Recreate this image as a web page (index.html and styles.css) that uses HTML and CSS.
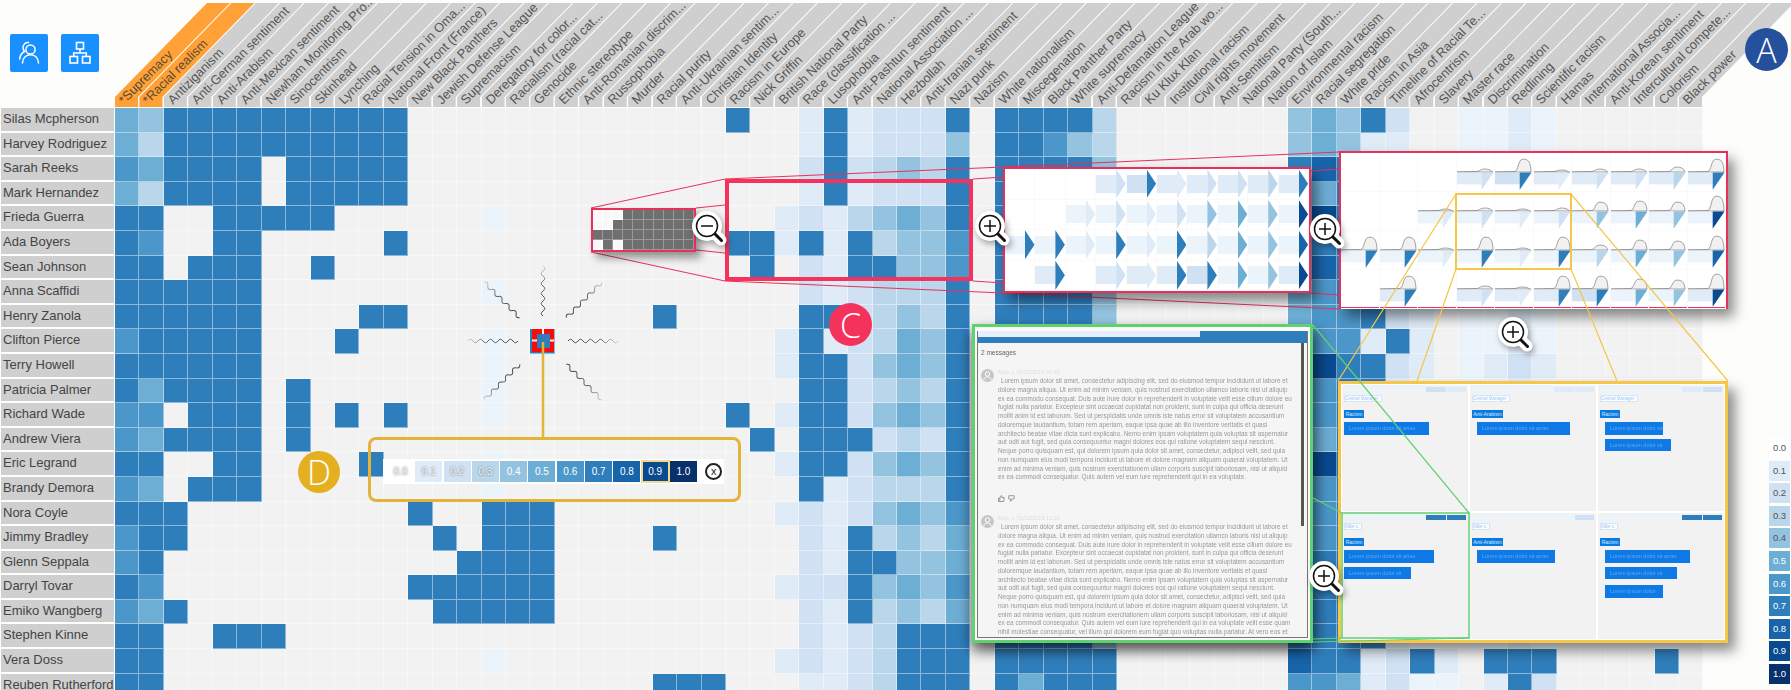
FILE: index.html
```html
<!DOCTYPE html>
<html lang="en">
<head>
<meta charset="utf-8">
<title>Topic matrix</title>
<link rel="stylesheet" href="styles.css">
</head>
<body>
<div class="page">
  <main class="matrix">
    <div class="head">
      <div class="tools">
        <button class="tool" type="button" aria-label="Users">
          <svg width="24" height="24" viewBox="0 0 24 24" fill="none" stroke="#fff" stroke-width="1.5" stroke-linecap="round" stroke-linejoin="round"><circle cx="13.5" cy="8.5" r="4.6"/><path d="M5.5 22c.3-5 3.3-8.300 8-8.300s7.700 3.300 8 8.300"/><path d="M11.500 1.500C8.500 1.200 6 3.400 6 6.500c0 1.700.7 3 1.700 4C4.800 11.800 3 14.500 2.700 18"/></svg>
        </button>
        <button class="tool" type="button" aria-label="Hierarchy">
          <svg width="24" height="24" viewBox="0 0 24 24" fill="none" stroke="#fff" stroke-width="1.6"><rect x="8.500" y="1.500" width="7" height="6.500"/><rect x="2" y="15.500" width="7.500" height="6.500"/><rect x="14.500" y="15.500" width="7.500" height="6.500"/><path d="M12 8v4M5.700 15.500V12h12.600v3.500"/></svg>
        </button>
      </div>
      <div class="cols">
        <div class="ch hot"><div class="ch-s"><span>*Supremacy</span></div></div>
        <div class="ch hot"><div class="ch-s"><span>*Racial realism</span></div></div>
        <div class="ch"><div class="ch-s"><span>Antiziganism</span></div></div>
        <div class="ch"><div class="ch-s"><span>Anti-German sentiment</span></div></div>
        <div class="ch"><div class="ch-s"><span>Anti-Arabism</span></div></div>
        <div class="ch"><div class="ch-s"><span>Anti-Mexican sentiment</span></div></div>
        <div class="ch"><div class="ch-s"><span>Newham Monitoring Pro...</span></div></div>
        <div class="ch"><div class="ch-s"><span>Sinocentrism</span></div></div>
        <div class="ch"><div class="ch-s"><span>Skinhead</span></div></div>
        <div class="ch"><div class="ch-s"><span>Lynching</span></div></div>
        <div class="ch"><div class="ch-s"><span>Racial Tension in Oma...</span></div></div>
        <div class="ch"><div class="ch-s"><span>National Front (France)</span></div></div>
        <div class="ch"><div class="ch-s"><span>New Black Panthers</span></div></div>
        <div class="ch"><div class="ch-s"><span>Jewish Defense League</span></div></div>
        <div class="ch"><div class="ch-s"><span>Supremacism</span></div></div>
        <div class="ch"><div class="ch-s"><span>Deregatory for color...</span></div></div>
        <div class="ch"><div class="ch-s"><span>Racialism (racial cat...</span></div></div>
        <div class="ch"><div class="ch-s"><span>Genocide</span></div></div>
        <div class="ch"><div class="ch-s"><span>Ethnic stereotype</span></div></div>
        <div class="ch"><div class="ch-s"><span>Anti-Romanian discrim...</span></div></div>
        <div class="ch"><div class="ch-s"><span>Russophobia</span></div></div>
        <div class="ch"><div class="ch-s"><span>Murder</span></div></div>
        <div class="ch"><div class="ch-s"><span>Racial purity</span></div></div>
        <div class="ch"><div class="ch-s"><span>Anti-Ukrainian sentim...</span></div></div>
        <div class="ch"><div class="ch-s"><span>Christian Identity</span></div></div>
        <div class="ch"><div class="ch-s"><span>Racism in Europe</span></div></div>
        <div class="ch"><div class="ch-s"><span>Nick Griffin</span></div></div>
        <div class="ch"><div class="ch-s"><span>British National Party</span></div></div>
        <div class="ch"><div class="ch-s"><span>Race (classification ...</span></div></div>
        <div class="ch"><div class="ch-s"><span>Lusophobia</span></div></div>
        <div class="ch"><div class="ch-s"><span>Anti-Pashtun sentiment</span></div></div>
        <div class="ch"><div class="ch-s"><span>National Association ...</span></div></div>
        <div class="ch"><div class="ch-s"><span>Hezbollah</span></div></div>
        <div class="ch"><div class="ch-s"><span>Anti-Iranian sentiment</span></div></div>
        <div class="ch"><div class="ch-s"><span>Nazi punk</span></div></div>
        <div class="ch"><div class="ch-s"><span>Nazism</span></div></div>
        <div class="ch"><div class="ch-s"><span>White nationalism</span></div></div>
        <div class="ch"><div class="ch-s"><span>Miscegenation</span></div></div>
        <div class="ch"><div class="ch-s"><span>Black Panther Party</span></div></div>
        <div class="ch"><div class="ch-s"><span>White supremacy</span></div></div>
        <div class="ch"><div class="ch-s"><span>Anti-Defamation League</span></div></div>
        <div class="ch"><div class="ch-s"><span>Racism in the Arab wo...</span></div></div>
        <div class="ch"><div class="ch-s"><span>Ku Klux Klan</span></div></div>
        <div class="ch"><div class="ch-s"><span>Institutional racism</span></div></div>
        <div class="ch"><div class="ch-s"><span>Civil rights movement</span></div></div>
        <div class="ch"><div class="ch-s"><span>Anti-Semitism</span></div></div>
        <div class="ch"><div class="ch-s"><span>National Party (South...</span></div></div>
        <div class="ch"><div class="ch-s"><span>Nation of Islam</span></div></div>
        <div class="ch"><div class="ch-s"><span>Environmental racism</span></div></div>
        <div class="ch"><div class="ch-s"><span>Racial segregation</span></div></div>
        <div class="ch"><div class="ch-s"><span>White pride</span></div></div>
        <div class="ch"><div class="ch-s"><span>Racism in Asia</span></div></div>
        <div class="ch"><div class="ch-s"><span>Timeline of Racial Te...</span></div></div>
        <div class="ch"><div class="ch-s"><span>Afrocentrism</span></div></div>
        <div class="ch"><div class="ch-s"><span>Slavery</span></div></div>
        <div class="ch"><div class="ch-s"><span>Master race</span></div></div>
        <div class="ch"><div class="ch-s"><span>Discrimination</span></div></div>
        <div class="ch"><div class="ch-s"><span>Redlining</span></div></div>
        <div class="ch"><div class="ch-s"><span>Scientific racism</span></div></div>
        <div class="ch"><div class="ch-s"><span>Hamas</span></div></div>
        <div class="ch"><div class="ch-s"><span>International Associa...</span></div></div>
        <div class="ch"><div class="ch-s"><span>Anti-Korean sentiment</span></div></div>
        <div class="ch"><div class="ch-s"><span>Intercultural compete...</span></div></div>
        <div class="ch"><div class="ch-s"><span>Colorism</span></div></div>
        <div class="ch"><div class="ch-s"><span>Black power</span></div></div>
      </div>
    </div>
    <div class="body">
      <div class="names">
        <div class="name">Silas Mcpherson</div>
        <div class="name">Harvey Rodriguez</div>
        <div class="name">Sarah Reeks</div>
        <div class="name">Mark Hernandez</div>
        <div class="name">Frieda Guerra</div>
        <div class="name">Ada Boyers</div>
        <div class="name">Sean Johnson</div>
        <div class="name">Anna Scaffidi</div>
        <div class="name">Henry Zanola</div>
        <div class="name">Clifton Pierce</div>
        <div class="name">Terry Howell</div>
        <div class="name">Patricia Palmer</div>
        <div class="name">Richard Wade</div>
        <div class="name">Andrew Viera</div>
        <div class="name">Eric Legrand</div>
        <div class="name">Brandy Demora</div>
        <div class="name">Nora Coyle</div>
        <div class="name">Jimmy Bradley</div>
        <div class="name">Glenn Seppala</div>
        <div class="name">Darryl Tovar</div>
        <div class="name">Emiko Wangberg</div>
        <div class="name">Stephen Kinne</div>
        <div class="name">Vera Doss</div>
        <div class="name">Reuben Rutherford</div>
      </div>
      <div class="cells" id="cells"></div>
    </div>
  </main>
  <aside class="side">
    <div class="badge badge-a">A</div>
    <div class="legend">
      <div class="lg v0 dk">0.0</div><div class="lg v2 dk">0.1</div><div class="lg v3 dk">0.2</div><div class="lg v4 dk">0.3</div><div class="lg v5 dk">0.4</div><div class="lg v6">0.5</div><div class="lg v7">0.6</div><div class="lg v8">0.7</div><div class="lg v9">0.8</div><div class="lg va">0.9</div><div class="lg vb">1.0</div>
    </div>
  </aside>
</div>

<svg class="layer" width="1791" height="690" aria-hidden="true">
  <g class="red-lines">
    <path d="M591 208L725 179M696 208L725 205M591 252L725 281M696 250L725 253"/>
    <path d="M725 179L1003 167L1339 152M973 179L1003 177M973 281L1003 283M725 281L1003 293L1339 309M1311 171L1339 169M1311 293L1339 295"/>
  </g>
</svg>

<div class="mini" id="mini"></div>
<div class="focus"></div>
<div class="glyph-panel" id="arrows"></div>
<div class="glyph-panel area-panel" id="areas"></div>

<div class="mail">
  <div class="mail-in">
    <div class="mail-top"><span class="seg-a"></span><span class="seg-b"></span></div>
    <div class="mail-bar"></div>
    <div class="mail-body">
      <div class="scroll"></div>
      <div class="count">2 messages</div>
      <div class="msg">
        <svg class="avatar" viewBox="0 0 13 13"><circle cx="6.500" cy="6.500" r="6.500" fill="#c6c6c6"/><circle cx="6.500" cy="5" r="2.200" fill="none" stroke="#fff"/><path d="M2.800 11c.5-2.300 2-3 3.700-3s3.200.7 3.700 3" fill="none" stroke="#fff"/></svg>
        <div class="msg-main">
          <div class="who">Mike c. 01/12/2016 07:45</div>
          <p class="txt">Lorem ipsum dolor sit amet, consectetur adipiscing elit, sed do eiusmod tempor incididunt ut labore et dolore magna aliqua. Ut enim ad minim veniam, quis nostrud exercitation ullamco laboris nisi ut aliquip ex ea commodo consequat. Duis aute irure dolor in reprehenderit in voluptate velit esse cillum dolore eu fugiat nulla pariatur. Excepteur sint occaecat cupidatat non proident, sunt in culpa qui officia deserunt mollit anim id est laborum. Sed ut perspiciatis unde omnis iste natus error sit voluptatem accusantium doloremque laudantium, totam rem aperiam, eaque ipsa quae ab illo inventore veritatis et quasi architecto beatae vitae dicta sunt explicabo. Nemo enim ipsam voluptatem quia voluptas sit aspernatur aut odit aut fugit, sed quia consequuntur magni dolores eos qui ratione voluptatem sequi nesciunt. Neque porro quisquam est, qui dolorem ipsum quia dolor sit amet, consectetur, adipisci velit, sed quia non numquam eius modi tempora incidunt ut labore et dolore magnam aliquam quaerat voluptatem. Ut enim ad minima veniam, quis nostrum exercitationem ullam corporis suscipit laboriosam, nisi ut aliquid ex ea commodi consequatur. Quis autem vel eum iure reprehenderit qui in ea voluptate.</p>
          <div class="thumbs">
            <svg width="7" height="7" viewBox="0 0 7 7" fill="none" stroke="#777" stroke-width=".7"><path d="M.5 3h1.300v3.500H.5zM1.800 3l1.500-2.500c.6 0 .8.500.6 1L3.600 2.600h2.700l-.6 3.900H1.800"/></svg>
            <svg width="7" height="7" viewBox="0 0 7 7" fill="none" stroke="#777" stroke-width=".7"><path d="M.7 .7h5.500v3.100H4.300L3 6.300c-.6 0-.7-.5-.6-1l.3-1.500H.7z"/></svg>
          </div>
        </div>
      </div>
      <div class="msg msg-2">
        <svg class="avatar" viewBox="0 0 13 13"><circle cx="6.500" cy="6.500" r="6.500" fill="#c6c6c6"/><circle cx="6.500" cy="5" r="2.200" fill="none" stroke="#fff"/><path d="M2.800 11c.5-2.300 2-3 3.700-3s3.200.7 3.700 3" fill="none" stroke="#fff"/></svg>
        <div class="msg-main">
          <div class="who">Mike c. 01/12/2016 11:02</div>
          <p class="txt">Lorem ipsum dolor sit amet, consectetur adipiscing elit, sed do eiusmod tempor incididunt ut labore et dolore magna aliqua. Ut enim ad minim veniam, quis nostrud exercitation ullamco laboris nisi ut aliquip ex ea commodo consequat. Duis aute irure dolor in reprehenderit in voluptate velit esse cillum dolore eu fugiat nulla pariatur. Excepteur sint occaecat cupidatat non proident, sunt in culpa qui officia deserunt mollit anim id est laborum. Sed ut perspiciatis unde omnis iste natus error sit voluptatem accusantium doloremque laudantium, totam rem aperiam, eaque ipsa quae ab illo inventore veritatis et quasi architecto beatae vitae dicta sunt explicabo. Nemo enim ipsam voluptatem quia voluptas sit aspernatur aut odit aut fugit, sed quia consequuntur magni dolores eos qui ratione voluptatem sequi nesciunt. Neque porro quisquam est, qui dolorem ipsum quia dolor sit amet, consectetur, adipisci velit, sed quia non numquam eius modi tempora incidunt ut labore et dolore magnam aliquam quaerat voluptatem. Ut enim ad minima veniam, quis nostrum exercitationem ullam corporis suscipit laboriosam, nisi ut aliquid ex ea commodi consequatur. Quis autem vel eum iure reprehenderit qui in ea voluptate velit esse quam nihil molestiae consequatur, vel illum qui dolorem eum fugiat quo voluptas nulla pariatur. At vero eos et accusamus et iusto odio dignissimos ducimus qui blanditiis praesentium.</p>
        </div>
      </div>
    </div>
  </div>
</div>

<div class="board">
  <section class="card">
    <div class="strip"><i class="v1"></i><i class="v1"></i><i class="v1"></i><i class="v1"></i><i class="v3"></i><i class="v2"></i></div>
    <div class="pill">Central Manager</div><div class="tag">Racism</div>
    <div class="bar" style="width:85px"><span>Lorem ipsum dolor sit amet</span></div>
  </section>
  <section class="card indent">
    <div class="strip"><i class="v1"></i><i class="v1"></i><i class="v1"></i><i class="v1"></i><i class="v2"></i><i class="v2"></i></div>
    <div class="pill">Central Manager</div><div class="tag wide">Anti-Arabism</div>
    <div class="bar" style="width:93px"><span>Lorem ipsum dolor sit amet</span></div>
  </section>
  <section class="card indent">
    <div class="strip"><i class="v1"></i><i class="v1"></i><i class="v1"></i><i class="v1"></i><i class="v2"></i><i class="v3"></i></div>
    <div class="pill">Central Manager</div><div class="tag">Racism</div>
    <div class="bar" style="width:58px"><span>Lorem ipsum dolor sit</span></div>
    <div class="bar" style="width:66px"><span>Lorem ipsum dolor sit</span></div>
  </section>
  <section class="card">
    <div class="strip"><i class="v1"></i><i class="v1"></i><i class="v1"></i><i class="v1"></i><i class="v8"></i><i class="v8"></i></div>
    <div class="pill short">Mike c.</div><div class="tag">Racism</div>
    <div class="bar" style="width:90px"><span>Lorem ipsum dolor sit amet</span></div>
    <div class="bar" style="width:67px"><span>Lorem ipsum dolor sit</span></div>
  </section>
  <section class="card indent">
    <div class="strip"><i class="v1"></i><i class="v1"></i><i class="v1"></i><i class="v1"></i><i class="v1"></i><i class="v3"></i></div>
    <div class="pill short">Mike c.</div><div class="tag wide">Anti-Arabism</div>
    <div class="bar" style="width:78px"><span>Lorem ipsum dolor sit amet</span></div>
  </section>
  <section class="card indent">
    <div class="strip"><i class="v1"></i><i class="v1"></i><i class="v1"></i><i class="v1"></i><i class="v8"></i><i class="v8"></i></div>
    <div class="pill short">Mike c.</div><div class="tag">Racism</div>
    <div class="bar" style="width:85px"><span>Lorem ipsum dolor sit amet</span></div>
    <div class="bar" style="width:72px"><span>Lorem ipsum dolor sit</span></div>
    <div class="bar bar-far" style="width:58px"><span>Lorem ipsum dolor</span></div>
  </section>
</div>

<div class="scale">
  <div class="strip-scale">
    <span class="sc v0 soft">0.0</span><span class="sc v2 soft">0.1</span><span class="sc v3 soft">0.2</span><span class="sc v4 soft">0.3</span><span class="sc v5">0.4</span><span class="sc v6">0.5</span><span class="sc v7">0.6</span><span class="sc v8">0.7</span><span class="sc v9">0.8</span><span class="sc va on">0.9</span><span class="sc vb">1.0</span>
    <span class="close">x</span>
  </div>
</div>

<svg class="layer" width="1791" height="690" aria-hidden="true">
  <defs>
    <linearGradient id="fade" gradientUnits="userSpaceOnUse" x1="24" y1="0" x2="80" y2="0"><stop offset="0" stop-color="#444"/><stop offset=".6" stop-color="#666"/><stop offset="1" stop-color="#999" stop-opacity=".2"/></linearGradient>
    <path id="wave" d="M25 0q2.500 -3.500 5 0t5 0t5 0t5 0t5 0t5 0t5 0t5 0t5 0t5 0" fill="none" stroke="url(#fade)" stroke-width="1"/>
    <g id="lens">
      <g class="halo"><circle r="15" fill="#fff"/><path d="M4 4L14 14" stroke="#fff" stroke-width="11" stroke-linecap="round"/></g>
      <circle r="10.500" fill="#fff" stroke="#111" stroke-width="1.500"/>
      <path d="M8 8L14.500 14.500" stroke="#111" stroke-width="3" stroke-linecap="round"/>
    </g>
  </defs>
  <rect class="marker-r" x="532" y="329" width="22" height="23"/>
  <path d="M543 329v6M543 346v6M532 340.500h6M548 340.500h6" stroke="#f2f2f2" stroke-width="2"/>
  <rect class="marker-c" x="537" y="334" width="13" height="14"/>
  <use href="#wave" transform="translate(543 341) rotate(0)"/>
  <use href="#wave" transform="translate(543 341) rotate(180)"/>
  <use href="#wave" transform="translate(543 341) rotate(-90)"/>
  <use href="#wave" transform="translate(543 341) rotate(-45) translate(8 0)"/>
  <use href="#wave" transform="translate(543 341) rotate(-135) translate(8 0)"/>
  <use href="#wave" transform="translate(543 341) rotate(45) translate(8 0)"/>
  <use href="#wave" transform="translate(543 341) rotate(135) translate(8 0)"/>
  <path class="stem" d="M543 342V437"/>
  <g class="yellow-lines"><path d="M1456 194L1338 381M1456 269L1417 381M1571 269L1617 381M1571 194L1728 381"/></g>
  <rect class="yellow-box" x="1456" y="194" width="115" height="75"/>
  <g class="green-lines"><path d="M1313 325L1469 513M1313 498L1342 513M1313 639L1342 638M1313 642L1469 638"/></g>
  <rect class="green-box" x="1342" y="513" width="127" height="125"/>
  <g transform="translate(707 226)"><use href="#lens"/><path d="M-6 0H6" stroke="#111" stroke-width="1.500"/></g>
  <g transform="translate(990 226)"><use href="#lens"/><path d="M-6 0H6M0 -6V6" stroke="#111" stroke-width="1.500"/></g>
  <g transform="translate(1325 229)"><use href="#lens"/><path d="M-6 0H6M0 -6V6" stroke="#111" stroke-width="1.500"/></g>
  <g transform="translate(1513 332)"><use href="#lens"/><path d="M-6 0H6M0 -6V6" stroke="#111" stroke-width="1.500"/></g>
  <g transform="translate(1324 576)"><use href="#lens"/><path d="M-6 0H6M0 -6V6" stroke="#111" stroke-width="1.500"/></g>
</svg>

<div class="badge badge-c">C</div>
<div class="badge badge-d">D</div>
<script src="script.js"></script>
</body>
</html>
```
FILE: styles.css
```css
* { box-sizing: border-box; }
html, body { margin: 0; padding: 0; }
body {
  width: 1791px;
  height: 690px;
  overflow: hidden;
  position: relative;
  background: #fdfdfb;
  font-family: "Liberation Sans", Arial, sans-serif;
  color: #444;
}
.page { display: flex; width: 1791px; height: 690px; }
.matrix { width: 1704px; flex: none; }
.side { flex: 1; display: flex; flex-direction: column; align-items: flex-end; }

.head { display: flex; height: 108px; }
.tools { width: 115px; flex: none; display: flex; gap: 13px; padding: 34px 0 0 10px; align-items: flex-start; }
.tool { width: 38px; height: 38px; padding: 0; border: 0; border-radius: 2px; background: #1890ff; display: flex; align-items: center; justify-content: center; }
.cols { display: flex; padding-top: 3px; }
.ch { width: 24.45px; flex: none; height: 105px; }
.ch-s {
  width: 118px;
  height: 104px;
  background: #cfcfcf;
  clip-path: polygon(0 104px, 0 94px, 92px 0, 115px 0, 23px 94px, 23px 104px);
  display: flex;
  align-items: flex-end;
  padding: 0 0 0 11px;
}
.ch-s span {
  display: block;
  white-space: nowrap;
  font-size: 12.800px;
  line-height: 15px;
  color: #555;
  transform-origin: 0 100%;
  transform: rotate(-45deg);
}
.hot .ch-s { background: #ffa136; }
.hot .ch-s span { color: #5a4a35; }

.body { display: flex; }
.names { width: 115px; flex: none; }
.name {
  height: 24.600px;
  width: 113px;
  margin-left: 1px;
  background: #cfcfcf;
  border-bottom: 2px solid #fdfdfb;
  font-size: 13px;
  line-height: 22px;
  padding-left: 2px;
  white-space: nowrap;
  overflow: hidden;
}
.cells { display: block; }
.row { display: flex; height: 24.600px; }
.row i {
  display: block;
  width: 24.450px;
  height: 24.600px;
  flex: none;
  border-right: 1px solid rgba(255, 255, 255, .45);
  border-bottom: 1px solid rgba(255, 255, 255, .45);
}

.v0 { background-color: #fff; }
.e, .row i.e { background-color: #f2f2f2; }
.v1 { background-color: #ebf3fb; }
.v2 { background-color: #dfebf7; }
.v3 { background-color: #cfe1f2; }
.v4 { background-color: #b9d6eb; }
.v5 { background-color: #93c3df; }
.v6 { background-color: #6daed5; }
.v7 { background-color: #4b97c9; }
.v8 { background-color: #2f7ebc; }
.v9 { background-color: #1864aa; }
.va { background-color: #0a4a90; }
.vb { background-color: #08306b; }

.badge {
  border-radius: 50%;
  color: #fff;
  font-family: "Open Sans", sans-serif;
  font-weight: 300;
  display: flex;
  align-items: center;
  justify-content: center;
}
.badge-a { position: relative; z-index: 3; width: 43px; height: 43px; margin: 28px 3px 0 0; background: #24509c; font-size: 34px; }
.badge-c { position: absolute; z-index: 3; left: 829px; top: 303px; width: 43px; height: 43px; background: #f5325c; font-size: 34px; }
.badge-d { position: absolute; z-index: 3; left: 298px; top: 451px; width: 42px; height: 42px; background: #e5b020; font-size: 34px; }

.legend { display: flex; flex-direction: column; gap: 2.600px; margin: 367px 1px 0 0; }
.lg { width: 21px; height: 20px; font-size: 9.500px; line-height: 20px; text-align: center; color: #fff; }
.lg.dk { color: #555; }

.layer { position: absolute; left: 0; top: 0; z-index: 2; pointer-events: none; }
.red-lines path { fill: none; stroke: #e8315a; stroke-width: 1; }
.yellow-lines path { fill: none; stroke: #f5c648; stroke-width: 1.200; }
.green-lines path { fill: none; stroke: #5fd16e; stroke-width: 1.200; }
.yellow-box { fill: none; stroke: #f5c648; stroke-width: 2; }
.green-box { fill: none; stroke: #5fd16e; stroke-width: 1.500; }
.stem { fill: none; stroke: #e3b33a; stroke-width: 2.500; }
.marker-r { fill: #fa0a0a; }
.marker-c { fill: #2f7ebc; }
.halo { filter: drop-shadow(2px 3px 3px rgba(0, 0, 0, .35)); }

.mini {
  position: absolute; left: 591px; top: 208px; z-index: 2;
  width: 105px; height: 44px;
  border: 2px solid #e8315a;
  display: grid;
  grid-template-columns: repeat(10, 1fr);
  grid-template-rows: repeat(4, 1fr);
  background: #fff;
  box-shadow: 5px 6px 8px rgba(0, 0, 0, .4);
}
.mini i { background: #6f6f6f; border-right: 1px solid #999; border-bottom: 1px solid #999; }
.mini i.off { background: #f8f8f8; border-color: #fff; }

.focus {
  position: absolute; left: 725px; top: 179px; z-index: 2;
  width: 248px; height: 102px;
  border: 4px solid #f5325c;
}

.glyph-panel {
  position: absolute; left: 1003px; top: 167px; z-index: 2;
  width: 308px; height: 126px;
  border: 2px solid #e8315a;
  background: #fff;
  display: grid;
  grid-template-columns: repeat(10, 1fr);
  grid-template-rows: repeat(4, 1fr);
  box-shadow: 6px 8px 12px rgba(0, 0, 0, .45);
}
.area-panel { left: 1339px; top: 151px; width: 389px; height: 158px; }
.gc { display: flex; align-items: center; border-right: 1px solid #fafafa; border-bottom: 1px solid #fafafa; min-width: 0; }
.gc b { display: block; width: 20px; height: 18px; flex: none; }
.gc u { display: block; width: 9.500px; height: 29px; flex: none; clip-path: polygon(0 0, 100% 50%, 0 100%); }
.gc svg { display: block; }

.mail {
  position: absolute; left: 972px; top: 324px; z-index: 2;
  width: 341px; height: 319px;
  border: 3px solid #5fd16e;
  background: #fafafa;
  padding: 4px 2px 2px;
  box-shadow: -2px 8px 12px rgba(0, 0, 0, .45), 6px 6px 12px rgba(0, 0, 0, .35);
}
.mail-in { height: 100%; border: 1px solid #777; border-top: 0; background: #f5f5f6; overflow: hidden; display: flex; flex-direction: column; }
.mail-top { display: flex; height: 6px; flex: none; }
.seg-a { width: 222px; background: #e6f0fb; }
.seg-b { flex: 1; background: #2f7ebc; }
.mail-bar { height: 6px; background: #2f7ebc; flex: none; }
.mail-body { position: relative; padding: 6px 12px 0 3px; flex: 1; overflow: hidden; }
.scroll { position: absolute; right: 3px; top: 0; width: 3px; height: 183px; background: #555; }
.count { font-size: 6.500px; line-height: 8px; color: #666; filter: blur(.4px); }
.msg { display: flex; gap: 4px; margin-top: 11px; }
.msg-2 { margin-top: 12px; }
.avatar { width: 13px; height: 13px; flex: none; margin-top: 1px; }
.msg-main { flex: 1; min-width: 0; }
.who { font-size: 5.500px; line-height: 8px; color: #ddd; filter: blur(.4px); }
.txt { margin: 1px 0 0; font-size: 6.400px; line-height: 8.750px; color: #999; text-indent: 3px; filter: blur(.7px); }
.thumbs { display: flex; gap: 3px; margin-top: 13px; }

.board {
  position: absolute; left: 1338px; top: 381px; z-index: 2;
  width: 390px; height: 262px;
  border: 3px solid #f7c548;
  background: #fff;
  padding: 1px;
  display: grid;
  grid-template-columns: repeat(3, 1fr);
  grid-template-rows: repeat(2, 1fr);
  gap: 2px;
  box-shadow: 7px 8px 12px rgba(0, 0, 0, .45);
}
.card { background: #f2f2f2; padding: 2px 2px 0; display: flex; flex-direction: column; align-items: flex-start; min-width: 0; overflow: hidden; }
.strip { display: flex; width: 100%; height: 5px; gap: 1px; flex: none; margin-bottom: 3px; }
.strip i { flex: 1; display: block; }
.pill { width: 38px; height: 7px; border: 1px solid #d5e6f7; background: #fbfdff; font-size: 4.500px; line-height: 5px; color: #9cc8f2; margin-bottom: 8px; white-space: nowrap; overflow: hidden; filter: blur(.4px); }
.pill.short { width: 18px; }
.tag { width: 20px; height: 8px; background: #0a7ae0; color: #d7ebff; font-size: 5px; line-height: 8px; text-align: center; margin-bottom: 4px; white-space: nowrap; overflow: hidden; }
.tag.wide { width: 31px; }
.bar { height: 12.500px; background: #0f7ae5; color: #5aaaf5; font-size: 5.500px; line-height: 12.500px; padding-left: 5px; margin-bottom: 4px; white-space: nowrap; overflow: hidden; }
.bar span { display: block; filter: blur(.6px); }
.indent .bar { margin-left: 5px; }
.bar-far { margin-top: 2px; }

.scale {
  position: absolute; left: 368px; top: 437px; z-index: 2;
  width: 373px; height: 65px;
  border: 3px solid #e3b33a;
  border-radius: 8px;
  padding: 19px 0 0 12px;
}
.strip-scale { display: flex; align-items: center; gap: 1.300px; width: 341px; height: 25px; background: #fff; padding: 0 4px; }
.sc { width: 27px; height: 21px; flex: none; text-align: center; font-size: 10px; line-height: 21px; color: #fff; }
.sc.soft { color: #f4f4f4; text-shadow: 0 0 2px #555; }
.sc.on { outline: 2px solid #f5d98a; outline-offset: -1px; }
.close { width: 17px; height: 17px; margin-left: 7px; border: 2px solid #222; border-radius: 50%; font-size: 11px; line-height: 12px; text-align: center; color: #222; flex: none; }
```
FILE: script.js
```js
var ROWS = [
 "65 8888888888 ............. 8..2823338 .88884....... 56583..1121......",
 "64 8888888888 ............. ...2823335 .88754....... 56522..1121......",
 "76 8888.88888 ............. ...3834548 .88885....... 89882..2232......",
 "64 8888.88888 ............. ...2823338 .88885....... 86882..1121......",
 "88 ..88888 ...... 1 ......... ..23245658 .88885....... 8a882..1121......",
 "87 ..88 ..... 8 ............. 8828284557 .88885....... 88882..1121......",
 "88 .888 .. 8 ................ .8.3288557 .88885....... 89882..1121......",
 "888888 ......... 1 ......... ...3234448 .88885....... 67882..1121......",
 "888888 .... 88 .......... 8 .. ...8834548 .88885....... 677832.1121......",
 "788888 ... 8 ..... 1 . 8 ....... ..28234658 .88885....... 877282.1121......",
 "888888 ......... 1 ......... ..28835658 .88885....... 8a8832.1232......",
 "868888 . 8 ....... 1 ......... ...8834548 .88885....... 87882..1121......",
 "77 . 888 . 8 . 8 . 8 ... 1 ......... 8.28835658 .88885....... 87882..1121......",
 "76 8888 . 8 ................. .8.8883438 .88885....... 86882..1121......",
 "88 .. 88 .... 8 .... 1 ......... ..28835658 .88885....... 8a882..1121......",
 "76 . 888 ......... 1 ......... ...8234448 .88885....... 87882..1121......",
 "888 ......... 8 .. 888 ....... ..23235657 .88885....... 87882..1121......",
 "788 .......... 8 . 888 ....8.. ...3284546 .88885....... 87882..1121......",
 "78 ............ 8888 ....... ...3288556 .88885....... 88882..1121......",
 "87 .......... 888888 ....... ..23385657 .88885....... 88882..1121......",
 "768 .......... 88888 ....... ...3284546 .88885....... 88882..1121......",
 "88 .. 888 .................. ...3234888 .88885....... 88882..1121......",
 "88 ............. 1 ......... ..23234888 .88888....... 9882382.888....8.",
 "88 .................... 888 ...2234888 .86888....... 7762311.283......"
];
var html = "";
ROWS.forEach(function (r) {
  html += '<div class="row">';
  r.replace(/ /g, "").split("").forEach(function (ch) {
    html += '<i class="' + (ch === "." ? "e" : "v" + ch) + '"></i>';
  });
  html += "</div>";
});
document.getElementById("cells").innerHTML = html;

var MINI = ["...1111111", "..11111111", "1111111111", ".1.1111111"];
document.getElementById("mini").innerHTML = MINI.join("").split("").map(function (c) {
  return c === "." ? '<i class="off"></i>' : "<i></i>";
}).join("");

var GLYPHS = [
  ["..", "..", "..", "23", "38", "22", "23", "23", "24", "28"],
  ["..", "..", "12", "13", "12", "13", "15", "16", "15", "1a"],
  ["18", "18", "12", "18", "12", "18", "14", "16", "15", "19"],
  ["..", "28", "..", "23", "22", "28", "38", "16", "15", "2a"]
];
var COLORS = { 1: "#ebf3fb", 2: "#dfebf7", 3: "#cfe1f2", 4: "#b9d6eb", 5: "#93c3df", 6: "#6daed5", 7: "#4b97c9", 8: "#2f7ebc", 9: "#1864aa", a: "#0a4a90" };
var HUMP = { 2: 2, 3: 3, 4: 5, 5: 9, 6: 10, 7: 11, 8: 13, 9: 14, a: 15 };
var arrows = "", areas = "";
GLYPHS.forEach(function (row) {
  row.forEach(function (g) {
    if (g === "..") {
      arrows += '<div class="gc"></div>';
      areas += '<div class="gc"></div>';
      return;
    }
    arrows += '<div class="gc"><b class="v' + g[0] + '"></b><u class="v' + g[1] + '"></u></div>';
    var h = HUMP[g[1]], top = 19 - h;
    areas += '<div class="gc"><svg width="38" height="38" viewBox="0 0 38 38">' +
      '<path d="M0 19L20 18.500C24 18 23 ' + top + " 28.500 " + top + "C35 " + top + " 36 " + (top + 4) + ' 36.500 19Z" fill="#f1f1f1" stroke="#7a7a7a" stroke-width=".7"/>' +
      '<rect x="0" y="19.500" width="25" height="12" fill="' + COLORS[g[0]] + '"/>' +
      '<path d="M25 19.500H37L25 37Z" fill="' + COLORS[g[1]] + '"/></svg></div>';
  });
});
document.getElementById("arrows").innerHTML = arrows;
document.getElementById("areas").innerHTML = areas;
```
